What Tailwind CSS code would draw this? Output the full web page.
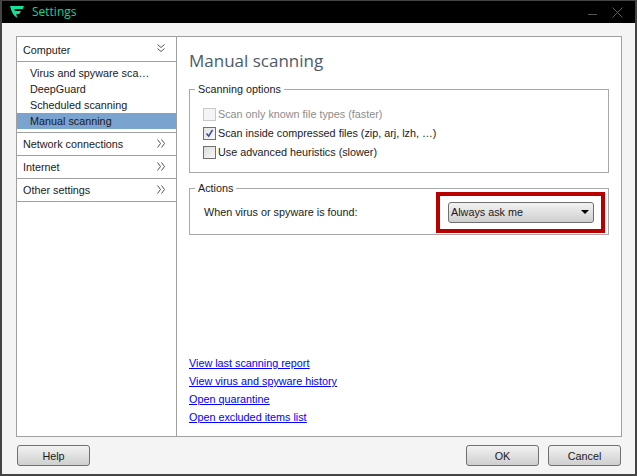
<!DOCTYPE html>
<html lang="en">
    <head>
        <meta charset="UTF-8" />
        <title>Settings</title>
        <script src="https://cdn.jsdelivr.net/npm/@tailwindcss/browser@4"></script>
    </head>
    <body class="w-[637px] h-[476px] overflow-hidden bg-[#f4f4f4] font-['Liberation_Sans',sans-serif] text-[10.8px] leading-[16px] text-[#1a1a1a]">
        <div class="h-full flex flex-col border-x-2 border-b-2 border-[#444444]">
            <!-- title bar -->
            <div class="h-[23px] shrink-0 bg-black flex items-center pl-[8px] pr-[10px] -mx-[2px] border-x-2 border-t border-[#444444]">
                <svg class="w-[14px] h-[12px] mr-[8px]" viewBox="0 0 14 12">
                    <path d="M0 0 H14 L12.5 3.2 H4.2 L5 5 H11 L9.3 8 H6.3 L7.2 12 Q2 9 0 0 Z" fill="#12e29a" />
                </svg>
                <span class="font-['Open_Sans',sans-serif] text-[#0fd690] text-[12px]">Settings</span>
                <div class="ml-auto flex items-center gap-[15px] pr-[2px]">
                    <div class="w-[9px] h-px bg-[#555555] mt-[4px]"></div>
                    <svg class="w-[11px] h-[11px]" viewBox="0 0 11 11">
                        <path d="M0.5 0.5 L10.5 10.5 M10.5 0.5 L0.5 10.5" stroke="#5c5c5c" stroke-width="1" fill="none" />
                    </svg>
                </div>
            </div>

            <!-- main panel -->
            <div class="mt-[13px] ml-[14px] mr-[13px] h-[401px] flex border border-[#a0a0a0] bg-white">
                <!-- sidebar -->
                <div class="w-[160px] shrink-0 border-r border-[#a0a0a0]">
                    <div class="h-[25px] flex items-center justify-between pl-[6px] pr-[11px] border-b border-[#a0a0a0]">
                        <span class="mt-[1px]">Computer</span>
                        <svg class="w-[8px] h-[9px] mb-[2px]" viewBox="0 0 8 9">
                            <path d="M0.5 0.5 L4 3.5 L7.5 0.5 M0.5 4.5 L4 7.5 L7.5 4.5" stroke="#555555" fill="none" />
                        </svg>
                    </div>
                    <div class="pt-[3px] pb-[3px] border-b border-[#a0a0a0]">
                        <div class="pl-[13px]">Virus and spyware sca…</div>
                        <div class="pl-[13px]">DeepGuard</div>
                        <div class="pl-[13px]">Scheduled scanning</div>
                        <div class="pl-[13px] bg-[#7aa3d0]">Manual scanning</div>
                    </div>
                    <div class="h-[23px] flex items-center justify-between pl-[6px] pr-[11px] border-b border-[#a0a0a0]">
                        <span>Network connections</span>
                        <svg class="w-[8px] h-[9px] mb-[2px]" viewBox="0 0 8 9">
                            <path d="M0.5 0.5 L3.5 4.5 L0.5 8.5 M4.5 0.5 L7.5 4.5 L4.5 8.5" stroke="#555555" fill="none" />
                        </svg>
                    </div>
                    <div class="h-[23px] flex items-center justify-between pl-[6px] pr-[11px] border-b border-[#a0a0a0]">
                        <span>Internet</span>
                        <svg class="w-[8px] h-[9px] mb-[2px]" viewBox="0 0 8 9">
                            <path d="M0.5 0.5 L3.5 4.5 L0.5 8.5 M4.5 0.5 L7.5 4.5 L4.5 8.5" stroke="#555555" fill="none" />
                        </svg>
                    </div>
                    <div class="h-[23px] flex items-center justify-between pl-[6px] pr-[11px] border-b border-[#a0a0a0]">
                        <span>Other settings</span>
                        <svg class="w-[8px] h-[9px] mb-[2px]" viewBox="0 0 8 9">
                            <path d="M0.5 0.5 L3.5 4.5 L0.5 8.5 M4.5 0.5 L7.5 4.5 L4.5 8.5" stroke="#555555" fill="none" />
                        </svg>
                    </div>
                </div>

                <!-- content -->
                <div class="flex-1 flex flex-col pl-[12px] pr-[12px]">
                    <h1 class="font-['Open_Sans',sans-serif] text-[#4d5b69] text-[17px] leading-[24px] mt-[12px]">Manual scanning</h1>

                    <fieldset class="mt-[9px] h-[91px] border border-[#a8a8a8] pl-[13px] pr-[8px]">
                        <legend class="ml-[-8px] px-[3px] leading-[14px]">Scanning options</legend>
                        <div class="mt-[10px] flex items-center h-[16px] gap-[2px] text-[#8c8c8c]">
                            <div class="w-[13px] h-[13px] border border-[#c8c8c8] bg-[#f4f4f4]"></div>
                            <span>Scan only known file types (faster)</span>
                        </div>
                        <div class="mt-[3px] flex items-center h-[16px] gap-[2px]">
                            <div class="w-[13px] h-[13px] border border-[#707070] bg-gradient-to-br from-[#e4e4e4] to-[#f8f8f8] flex items-center justify-center">
                                <svg class="w-[9px] h-[9px]" viewBox="0 0 9 9">
                                    <path d="M1.5 4.5 L3.7 7.2 L7.5 0.8" stroke="#3d4f9e" stroke-width="1.6" fill="none" />
                                </svg>
                            </div>
                            <span>Scan inside compressed files (zip, arj, lzh, …)</span>
                        </div>
                        <div class="mt-[3px] flex items-center h-[16px] gap-[2px]">
                            <div class="w-[13px] h-[13px] border border-[#707070] bg-gradient-to-br from-[#dcdcdc] to-[#f8f8f8]"></div>
                            <span>Use advanced heuristics (slower)</span>
                        </div>
                    </fieldset>

                    <fieldset class="mt-[8px] h-[54px] border border-[#a8a8a8] pl-[14px] relative">
                        <legend class="ml-[-9px] px-[3px] leading-[14px]">Actions</legend>
                        <div class="mt-[3px] flex items-center h-[28px] justify-between pr-[14px]">
                            <span>When virus or spyware is found:</span>
                            <div class="w-[146px] h-[21px] rounded-[3px] border border-[#707070] bg-gradient-to-b from-[#f2f2f2] to-[#cfcfcf] flex items-center justify-between pl-[2px] pr-[4px]">
                                <span>Always ask me</span>
                                <div class="w-0 h-0 border-x-[4px] border-x-transparent border-t-[4px] border-t-black"></div>
                            </div>
                        </div>
                        <!-- red highlight drawn over the screenshot -->
                        <div class="absolute left-[246px] top-[-3px] w-[169px] h-[41px] border-[4px] border-[#b80000]"></div>
                    </fieldset>

                    <div class="mt-auto mb-[11px] flex flex-col gap-[2px] text-[#0000ff] underline">
                        <a href="#">View last scanning report</a>
                        <a href="#">View virus and spyware history</a>
                        <a href="#">Open quarantine</a>
                        <a href="#">Open excluded items list</a>
                    </div>
                </div>
            </div>

            <!-- bottom buttons -->
            <div class="mt-[8px] ml-[15px] mr-[14px] flex text-center">
                <button class="w-[73px] h-[21px] rounded-[3px] border border-[#707070] bg-gradient-to-b from-[#f2f2f2] to-[#cfcfcf]">Help</button>
                <button class="ml-auto w-[73px] h-[21px] rounded-[3px] border border-[#707070] bg-gradient-to-b from-[#f2f2f2] to-[#cfcfcf]">OK</button>
                <button class="ml-[9px] w-[73px] h-[21px] rounded-[3px] border border-[#707070] bg-gradient-to-b from-[#f2f2f2] to-[#cfcfcf]">Cancel</button>
            </div>
        </div>
    </body>
</html>
